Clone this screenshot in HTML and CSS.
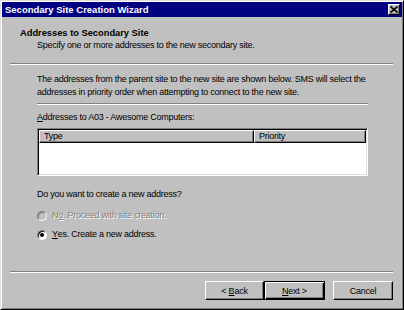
FILE: index.html
```html
<!DOCTYPE html>
<html lang="en">

<head>
    <meta charset="UTF-8">
    <title>Secondary Site Creation Wizard</title>
    <link rel="stylesheet" href="styles.css">
</head>

<body>
    <div class="window">
        <!-- title bar -->
        <div class="titlebar">
            <span class="title">Secondary Site Creation Wizard</span>
            <span class="close-btn">
                <svg width="8" height="7" viewBox="0 0 8 7">
                    <path d="M0.5 0.5 L7.5 6.5 M7.5 0.5 L0.5 6.5" stroke="#000" stroke-width="1.6" fill="none"/>
                </svg>
            </span>
        </div>

        <!-- page header -->
        <div class="header">
            <div class="header-title">Addresses to Secondary Site</div>
            <div class="header-sub">Specify one or more addresses to the new secondary site.</div>
        </div>
        <div class="etched wide"></div>

        <!-- page body -->
        <div class="content">
            <p class="intro">The addresses from the parent site to the new site are shown below. SMS will select the<br>addresses in priority order when attempting to connect to the new site.</p>
            <div class="etched"></div>

            <div class="list-label"><u>A</u>ddresses to A03 - Awesome Computers:</div>
            <div class="listbox">
                <div class="list-head">
                    <span class="col col-type">Type</span>
                    <span class="col col-priority">Priority</span>
                </div>
            </div>

            <div class="question">Do you want to create a new address?</div>
            <label class="radio disabled"><span class="radio-dot"></span>N<u>o</u>. Proceed with site creation.</label>
            <label class="radio"><span class="radio-dot checked"></span><u>Y</u>es. Create a new address.</label>
        </div>

        <!-- buttons -->
        <div class="footer">
            <div class="etched wide"></div>
            <div class="buttons">
                <button class="btn btn-back">&lt; <u>B</u>ack</button>
                <button class="btn btn-next default">Next &gt;</button>
                <button class="btn btn-cancel">Cancel</button>
            </div>
        </div>
    </div>
</body>

</html>
```

FILE: styles.css
```css
* {
    box-sizing: border-box;
    margin: 0;
    padding: 0;
}

body {
    width: 404px;
    height: 310px;
    font-family: 'Liberation Sans', Arial, sans-serif;
    font-size: 9px;
    letter-spacing: -0.25px;
    color: #000;
    background: #c0c0c0;
}

u {
    text-decoration: underline;
}

.window {
    display: flex;
    flex-direction: column;
    width: 404px;
    height: 310px;
    padding: 1px;
    background: #c0c0c0;
    border: 1px solid;
    border-color: #dfdfdf #000 #000 #dfdfdf;
    box-shadow: inset 1px 1px #fff, inset -1px -1px #808080;
}

/* title bar */

.titlebar {
    display: flex;
    align-items: center;
    justify-content: space-between;
    height: 15px;
    padding: 0 2px 0 3px;
    background: #000080;
}

.title {
    color: #fff;
    font-weight: 700;
    font-size: 9.5px;
    letter-spacing: 0;
}

.close-btn {
    display: flex;
    align-items: center;
    justify-content: center;
    width: 12px;
    height: 11px;
    background: #c0c0c0;
    border: 1px solid;
    border-color: #fff #000 #000 #fff;
    box-shadow: inset -1px -1px #808080;
}

/* header */

.header {
    padding: 10px 0 0 18px;
    line-height: 12px;
}

.header-title {
    font-weight: 700;
    font-size: 9.3px;
    letter-spacing: 0;
}

.header-sub {
    padding-left: 17px;
}

.etched {
    height: 2px;
    border-top: 1px solid #808080;
    border-bottom: 1px solid #fff;
}

.header + .etched {
    margin-top: 12px;
}

.wide {
    margin: 0 9px 0 8px;
}

/* body */

.content {
    padding-left: 35px;
    width: 366px;
    line-height: 13px;
}

.intro {
    margin-top: 8px;
    white-space: nowrap;
}

.intro + .etched {
    margin-top: 4px;
}

.list-label {
    margin-top: 6px;
}

.listbox {
    margin-top: 4px;
    height: 48px;
    background: #fff;
    border: 1px solid;
    border-color: #808080 #fff #fff #808080;
    box-shadow: inset 1px 1px #000, inset -1px -1px #dfdfdf;
    padding: 1px;
}

.list-head {
    display: flex;
    height: 13px;
    line-height: 11px;
}

.col {
    background: #c0c0c0;
    border: 1px solid;
    border-color: #fff #000 #000 #fff;
    box-shadow: inset -1px -1px #808080;
    padding-left: 4px;
}

.col-type {
    width: 215px;
}

.col-priority {
    flex: 1;
}

.question {
    margin-top: 12px;
}

.radio {
    display: flex;
    align-items: center;
    margin-top: 6px;
}

.question + .radio {
    margin-top: 8px;
}

.radio-dot {
    position: relative;
    width: 10px;
    height: 10px;
    margin-right: 5px;
    border-radius: 50%;
    background: #fff;
    border: 1px solid;
    border-color: #808080 #fff #fff #808080;
    box-shadow: inset 1px 1px #000;
}

.radio-dot.checked::after {
    content: "";
    position: absolute;
    left: 2px;
    top: 2px;
    width: 4px;
    height: 4px;
    border-radius: 50%;
    background: #000;
}

.radio.disabled {
    color: #808080;
    text-shadow: 1px 1px #fff;
}

.radio.disabled .radio-dot {
    background: #c0c0c0;
    box-shadow: inset 1px 1px #808080;
}

/* footer */

.footer {
    margin-top: auto;
}

.buttons {
    display: flex;
    justify-content: flex-end;
    padding: 8px 9px 8px 0;
}

.btn {
    height: 19px;
    width: 60px;
    font-family: 'Liberation Sans', Arial, sans-serif;
    font-size: 9px;
    letter-spacing: -0.25px;
    color: #000;
    background: #c0c0c0;
    border: 1px solid;
    border-color: #fff #000 #000 #fff;
    box-shadow: inset -1px -1px #808080;
}

.btn-back {
    width: 59px;
}

.btn.default {
    width: 61px;
    border: 1px solid #000;
    box-shadow: inset 1px 1px #fff, inset -1px -1px #000, inset -2px -2px #808080;
}

.btn-next::first-letter {
    text-decoration: underline;
}

.btn-cancel {
    margin-left: 8px;
}
```
